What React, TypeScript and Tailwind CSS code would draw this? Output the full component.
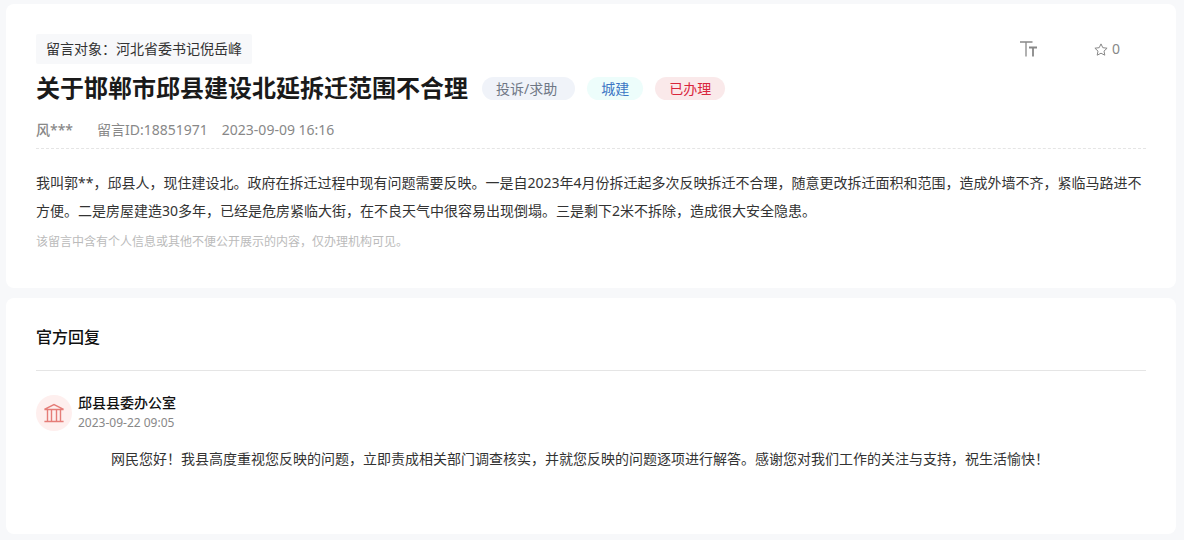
import type { ReactNode } from 'react'

function Tag({ className, children }: { className: string; children: ReactNode }) {
  return (
    <span className={`h-[23px] rounded-full pl-3.5 text-sm leading-6 whitespace-nowrap ${className}`}>
      {children}
    </span>
  )
}

function TextSizeIcon() {
  return (
    <svg width="18" height="16" viewBox="0 0 18 16" fill="none" stroke="currentColor" aria-hidden="true">
      <path d="M0 1h12.5M6 1v14.5" strokeWidth="1.3" />
      <path d="M9 6.5h8M13 6.5v9" strokeWidth="1.8" />
    </svg>
  )
}

function StarIcon() {
  return (
    <svg width="14" height="13" viewBox="0 0 14 13" fill="none" stroke="currentColor" strokeLinejoin="round" aria-hidden="true">
      <path d="M7 .9l1.8 3.8 4.3.5-3.1 2.9.8 4.1L7 10.2l-3.8 2 .8-4.1L.9 5.2l4.3-.5z" />
    </svg>
  )
}

function InstitutionIcon() {
  return (
    <svg width="20" height="20" viewBox="0 0 20 20" fill="none" stroke="#e57d78" strokeWidth="1.4" aria-hidden="true">
      <path d="M.4 6.3L10 1.6l9.6 4.7M.4 6.5h19.2M.4 18.5h19.2" />
      <path d="M3.5 6.5v12M7.5 6.5v12M12.5 6.5v12M16.5 6.5v12" />
    </svg>
  )
}

export default function App() {
  return (
    <main className="flex min-h-screen flex-col gap-2.5 bg-[#f7f8fa] pt-1 pr-2 pb-1.5 pl-1.5 font-['Noto_Sans','Noto_Sans_CJK_SC',sans-serif] text-sm text-[#333]">
      <article className="rounded-lg bg-white px-[30px] pt-[30px] pb-[34px]">
        <div className="flex items-start justify-between">
          <p className="rounded-xs bg-[#f7f8fa] px-2.5 leading-[30px]">留言对象：河北省委书记倪岳峰</p>
          <div className="flex items-center gap-14 pr-[26px] leading-[30px] text-[#888]">
            <button type="button" aria-label="字号">
              <TextSizeIcon />
            </button>
            <button type="button" aria-label="收藏" className="flex items-center gap-1">
              <StarIcon />
              <span>0</span>
            </button>
          </div>
        </div>
        <div className="flex flex-wrap items-center gap-3">
          <h1 className="mr-0.5 text-2xl leading-12 font-bold text-[#1a1a1a]">关于邯郸市邱县建设北延拆迁范围不合理</h1>
          <Tag className="bg-[#f0f3f9] pr-[18px] text-[#6f7785]">投诉/求助</Tag>
          <Tag className="bg-[#edfdfb] pr-3.5 text-[#3c76c4]">城建</Tag>
          <Tag className="bg-[#fae9ea] pr-3.5 text-[#d9263c]">已办理</Tag>
        </div>
        <div className="flex border-b border-dashed border-[#e5e5e5] pt-1 pb-1 leading-7 text-[#888]">
          <span className="mr-6 font-medium">风***</span>
          <span className="mr-3.5">留言ID:18851971</span>
          <time>2023-09-09 16:16</time>
        </div>
        <p className="mt-5 leading-7">
          我叫郭**，邱县人，现住建设北。政府在拆迁过程中现有问题需要反映。一是自2023年4月份拆迁起多次反映拆迁不合理，随意更改拆迁面积和范围，造成外墙不齐，紧临马路进不方便。二是房屋建造30多年，已经是危房紧临大街，在不良天气中很容易出现倒塌。三是剩下2米不拆除，造成很大安全隐患。
        </p>
        <p className="mt-[5px] text-xs leading-6 text-[#bbb]">该留言中含有个人信息或其他不便公开展示的内容，仅办理机构可见。</p>
      </article>

      <section className="grow rounded-lg bg-white px-[30px] pb-12">
        <h2 className="border-b border-[#e5e5e5] pt-[19px] pb-[13px] text-base leading-10 font-medium text-[#111]">官方回复</h2>
        <div className="mt-[22px] flex items-center gap-1.5">
          <div className="flex size-9 items-center justify-center rounded-full bg-[#feefee]">
            <InstitutionIcon />
          </div>
          <div>
            <h3 className="leading-5 font-medium text-[#111]">邱县县委办公室</h3>
            <time className="block text-xs leading-5 text-[#888]">2023-09-22 09:05</time>
          </div>
        </div>
        <p className="mt-3 pl-[75px] leading-7">
          网民您好！我县高度重视您反映的问题，立即责成相关部门调查核实，并就您反映的问题逐项进行解答。感谢您对我们工作的关注与支持，祝生活愉快！
        </p>
      </section>
    </main>
  )
}
